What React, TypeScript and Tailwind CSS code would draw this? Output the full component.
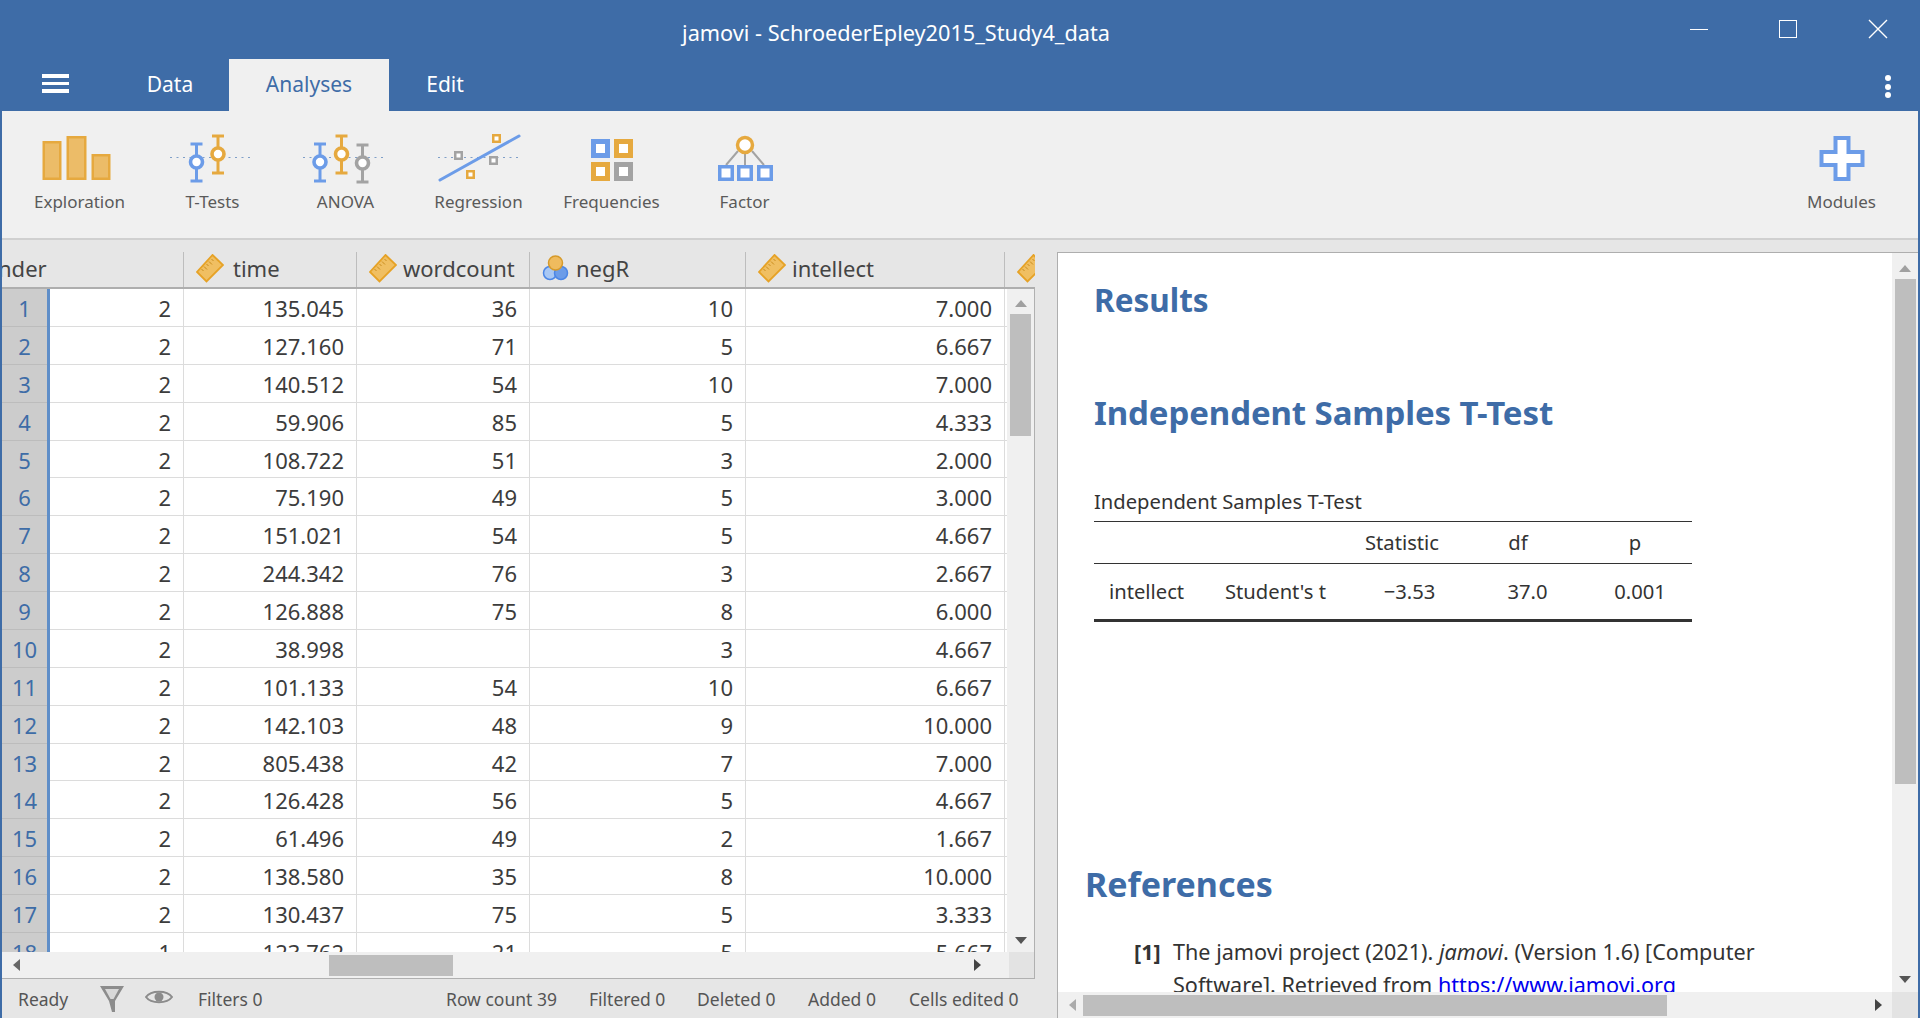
import React from "react";

const O = "#e6a93f";
const OF = "#ecbc68";
const B = "#6c9ce8";
const G = "#a3a3a3";

const rows: (string | number)[][] = [
  [2, "135.045", 36, 10, "7.000"],
  [2, "127.160", 71, 5, "6.667"],
  [2, "140.512", 54, 10, "7.000"],
  [2, "59.906", 85, 5, "4.333"],
  [2, "108.722", 51, 3, "2.000"],
  [2, "75.190", 49, 5, "3.000"],
  [2, "151.021", 54, 5, "4.667"],
  [2, "244.342", 76, 3, "2.667"],
  [2, "126.888", 75, 8, "6.000"],
  [2, "38.998", "", 3, "4.667"],
  [2, "101.133", 54, 10, "6.667"],
  [2, "142.103", 48, 9, "10.000"],
  [2, "805.438", 42, 7, "7.000"],
  [2, "126.428", 56, 5, "4.667"],
  [2, "61.496", 49, 2, "1.667"],
  [2, "138.580", 35, 8, "10.000"],
  [2, "130.437", 75, 5, "3.333"],
  [1, "123.762", 21, 5, "5.667"],
];

function Ruler() {
  return (
    <svg width="28" height="29" viewBox="0 0 28 29" className="shrink-0">
      <polygon points="16.500,1 27,11 10.500,27.500 1,18" fill="#f0bf62" stroke="#e6a226" strokeWidth="1.800" />
      <path d="M15.500 5L17.500 7M13 7.500L16 10.500M10.500 10L12.500 12M8 12.500L11 15.500M5.500 15L7.500 17" stroke="#c98d1e" strokeWidth="1" />
    </svg>
  );
}

function Nominal() {
  return (
    <svg width="27" height="27" viewBox="0 0 27 27" className="shrink-0">
      <circle cx="8" cy="18" r="6.500" fill="#a9c8f4" stroke="#4b86e6" strokeWidth="1.500" />
      <circle cx="19" cy="18" r="6.500" fill="#6c9ce8" stroke="#4b86e6" strokeWidth="1.500" />
      <circle cx="13.500" cy="8" r="7" fill="#efbb5e" stroke="#d69a2a" strokeWidth="1.500" />
    </svg>
  );
}

function ErrorBar({ x, top, bottom, cy, color, cap = 12 }: { x: number; top: number; bottom: number; cy: number; color: string; cap?: number }) {
  return (
    <g>
      <path d={`M${x} ${top}V${bottom}M${x - cap / 2} ${top}H${x + cap / 2}M${x - cap / 2} ${bottom}H${x + cap / 2}`} stroke={color} strokeWidth="3" fill="none" />
      <circle cx={x} cy={cy} r="6" fill="#fff" stroke={color} strokeWidth="3.600" />
    </g>
  );
}

function Square({ x, y, s, color, w = 2.500 }: { x: number; y: number; s: number; color: string; w?: number }) {
  return <rect x={x + w / 2} y={y + w / 2} width={s - w} height={s - w} fill="#fff" stroke={color} strokeWidth={w} />;
}

function ExplorationIcon() {
  return (
    <svg width="90" height="56" viewBox="0 0 90 56">
      <rect x="8.750" y="13.250" width="16.500" height="36.500" fill={OF} stroke={O} strokeWidth="2.500" />
      <rect x="32.750" y="8.250" width="17.500" height="41.500" fill={OF} stroke={O} strokeWidth="2.500" />
      <rect x="57.750" y="26.250" width="16.500" height="23.500" fill={OF} stroke={O} strokeWidth="2.500" />
    </svg>
  );
}

function Dotted({ x1, x2 }: { x1: number; x2: number }) {
  return <path d={`M${x1} 28.500H${x2}`} stroke="#7f9fc8" strokeWidth="1" strokeDasharray="2 4.500" fill="none" />;
}

function TTestIcon() {
  return (
    <svg width="90" height="56" viewBox="0 0 90 56">
      <Dotted x1={2} x2={84} />
      <ErrorBar x={28.500} top={15} bottom={52} cy={33} color={B} />
      <ErrorBar x={50} top={7} bottom={44} cy={25} color={O} />
    </svg>
  );
}

function AnovaIcon() {
  return (
    <svg width="90" height="56" viewBox="0 0 90 56">
      <Dotted x1={2} x2={84} />
      <ErrorBar x={19} top={15} bottom={52} cy={33} color={B} />
      <ErrorBar x={40.500} top={7} bottom={44} cy={25} color={O} />
      <ErrorBar x={61.500} top={16} bottom={53} cy={34} color={G} />
    </svg>
  );
}

function RegressionIcon() {
  return (
    <svg width="90" height="56" viewBox="0 0 90 56">
      <Dotted x1={4} x2={86} />
      <path d="M6 51L85 7" stroke={B} strokeWidth="3" strokeLinecap="round" />
      <Square x={58} y={5} s={9} color={O} />
      <Square x={20} y={22} s={9} color={G} />
      <Square x={55} y={27} s={9} color={G} />
      <Square x={32} y={41} s={9} color={O} />
    </svg>
  );
}

function FrequenciesIcon() {
  return (
    <svg width="90" height="56" viewBox="0 0 90 56">
      <Square x={24} y={10} s={19} color={B} w={5} />
      <Square x={47} y={10} s={19} color={O} w={5} />
      <Square x={24} y={33} s={19} color={O} w={5} />
      <Square x={47} y={33} s={19} color={G} w={5} />
    </svg>
  );
}

function FactorIcon() {
  return (
    <svg width="90" height="56" viewBox="0 0 90 56">
      <path d="M38 22L26 36M45 24V36M52 22L64 36" stroke={G} strokeWidth="2" fill="none" />
      <circle cx="45" cy="16" r="7.500" fill="#fff" stroke={O} strokeWidth="3.500" />
      <Square x={18} y={36} s={16} color={B} w={3.500} />
      <Square x={37} y={36} s={16} color={B} w={3.500} />
      <Square x={57} y={36} s={16} color={B} w={3.500} />
    </svg>
  );
}

function PlusIcon() {
  return (
    <svg width="90" height="56" viewBox="0 0 90 56">
      <polygon points="38.500,9 51.500,9 51.500,23 65.500,23 65.500,36 51.500,36 51.500,50 38.500,50 38.500,36 24.500,36 24.500,23 38.500,23" fill="#fff" stroke={B} strokeWidth="4" />
    </svg>
  );
}

function ToolButton({ label, children, className = "" }: { label: string; children: React.ReactNode; className?: string }) {
  return (
    <div className={`flex w-[133px] flex-col items-center ${className}`}>
      <div className="h-[56px]">{children}</div>
      <div className="mt-[5px] h-[24px] text-[17px] leading-[24px] text-[#5a5a5a]">{label}</div>
    </div>
  );
}

function Tri({ dir, color = "#a0a0a0" }: { dir: "up" | "down" | "left" | "right"; color?: string }) {
  const pts = { up: "0,8 6,1 12,8", down: "0,1 12,1 6,8", left: "8,0 8,12 1,6", right: "1,0 1,12 8,6" }[dir];
  const w = dir === "up" || dir === "down" ? 12 : 9;
  const h = dir === "up" || dir === "down" ? 9 : 12;
  const vb = `0 0 ${w} ${h}`;
  return (
    <svg width={w} height={h} viewBox={vb} className="shrink-0">
      <polygon points={pts} fill={color} />
    </svg>
  );
}

function HeaderCell({ w, children, last }: { w: string; children: React.ReactNode; last?: boolean }) {
  return (
    <div className={`relative flex h-full shrink-0 items-center overflow-hidden pt-[8px] ${w}`}>
      {children}
      {!last && <div className="absolute right-0 bottom-0 h-[35px] w-px bg-[#bdbdbd]" />}
    </div>
  );
}

function Cell({ w, v }: { w: string; v: string | number }) {
  return <div className={`h-full shrink-0 border-r border-[#dcdcdc] pr-[12px] text-right ${w}`}>{v}</div>;
}

function DataPane() {
  return (
    <div className="flex w-[1033px] shrink-0 flex-col">
      <div className="flex h-[49px] shrink-0 items-stretch border-b-2 border-[#aeaeae] bg-[#e6e6e6] pt-[1px] text-[22px] text-[#444]">
        <HeaderCell w="w-[182px]">
          <span className="ml-[-4px]">nder</span>
        </HeaderCell>
        <HeaderCell w="w-[173px]">
          <div className="ml-[12px] flex items-center gap-[9px]"><Ruler /><span>time</span></div>
        </HeaderCell>
        <HeaderCell w="w-[173px]">
          <div className="ml-[12px] flex items-center gap-[6px]"><Ruler /><span>wordcount</span></div>
        </HeaderCell>
        <HeaderCell w="w-[216px]">
          <div className="ml-[12px] flex items-center gap-[7px]"><Nominal /><span>negR</span></div>
        </HeaderCell>
        <HeaderCell w="w-[259px]">
          <div className="ml-[12px] flex items-center gap-[6px]"><Ruler /><span>intellect</span></div>
        </HeaderCell>
        <HeaderCell w="w-[30px]" last>
          <div className="ml-[12px]"><Ruler /></div>
        </HeaderCell>
      </div>
      <div className="flex min-h-0 flex-1 border-r border-[#b0b0b0] bg-white">
        <div className="w-[1005px] shrink-0 overflow-hidden">
          {rows.map((r, i) => (
            <div key={i} className="flex h-[37.88px] border-b border-[#dcdcdc] text-[22px] leading-[38.500px] text-[#3c3c3c]">
              <div className="h-[38px] w-[45px] shrink-0 border-b border-[#bcbcbc] bg-[#cccccc] text-center text-[#3e6ca7]">{i + 1}</div>
              <div className="h-[38px] w-[3px] shrink-0 bg-[#5f8ec8]" />
              <Cell w="w-[134px]" v={r[0]} />
              <Cell w="w-[173px]" v={r[1]} />
              <Cell w="w-[173px]" v={r[2]} />
              <Cell w="w-[216px]" v={r[3]} />
              <Cell w="w-[259px]" v={r[4]} />
            </div>
          ))}
        </div>
        <div className="flex w-[27px] shrink-0 flex-col items-center bg-[#f0f0f0] pt-[10px]">
          <Tri dir="up" />
          <div className="mt-[6px] h-[122px] w-[21px] bg-[#bebebe]" />
          <div className="flex-1" />
          <div className="mb-[7px]"><Tri dir="down" color="#555" /></div>
        </div>
      </div>
      <div className="flex h-[27px] shrink-0 items-center border-r border-b border-[#b0b0b0] bg-[#f0f0f0]">
        <div className="ml-[10px]"><Tri dir="left" color="#666" /></div>
        <div className="ml-[308px] h-[21px] w-[124px] bg-[#bebebe]" />
        <div className="flex-1" />
        <div className="mr-[27px]"><Tri dir="right" color="#444" /></div>
        <div className="h-full w-[25px] bg-[#e3e3e3]" />
      </div>
      <div className="flex h-[39px] shrink-0 items-center pt-[1px] text-[17.500px] text-[#555]">
        <span className="ml-[16px] w-[81px]">Ready</span>
        <svg width="26" height="28" viewBox="0 0 26 28" className="shrink-0">
          <path d="M1 1H25L16 16V27H13L10 16Z" fill="#8c8c8c" />
          <path d="M6 4H20L14.500 14H11.500Z" fill="#d8d8d8" />
        </svg>
        <svg width="28" height="16" viewBox="0 0 28 16" className="ml-[20px] mb-[4px] shrink-0">
          <path d="M1 8C6 1 22 1 27 8C22 15 6 15 1 8Z" fill="#e6e6e6" stroke="#8c8c8c" strokeWidth="2" />
          <circle cx="14" cy="8" r="4.500" fill="#8c8c8c" />
        </svg>
        <span className="ml-[25px] w-[248px]">Filters 0</span>
        <span className="w-[143px]">Row count 39</span>
        <span className="w-[108px]">Filtered 0</span>
        <span className="w-[111px]">Deleted 0</span>
        <span className="w-[101px]">Added 0</span>
        <span className="whitespace-nowrap">Cells edited 0</span>
      </div>
    </div>
  );
}

function ResultsPane() {
  const tcell = "text-[20.200px] text-[#333]";
  return (
    <div className="mt-[12px] ml-[22px] flex h-[766px] min-w-0 flex-1 flex-col border-t border-l border-[#aeaeae] bg-white">
      <div className="flex min-h-0 flex-1">
        <div className="min-w-0 flex-1 overflow-hidden pl-[36px]">
          <h1 className="mt-[27px] text-[31.500px] leading-[40px] font-bold text-[#3e6ca7]">Results</h1>
          <h2 className="mt-[71px] text-[33px] leading-[44px] font-bold tracking-[-0.1px] text-[#3e6ca7]">Independent Samples T-Test</h2>
          <div className={`mt-[52px] mb-[6px] h-[28px] leading-[28px] ${tcell}`}>Independent Samples T-Test</div>
          <div className="w-[598px] border-t border-[#333]">
            <div className={`grid h-[42px] grid-cols-[116px_140px_104px_126px_96px_16px] items-center border-b border-[#333] text-center ${tcell}`}>
              <div />
              <div />
              <div>Statistic</div>
              <div className="pl-[2px]">df</div>
              <div className="pl-[14px]">p</div>
              <div />
            </div>
            <div className={`grid h-[58px] grid-cols-[116px_140px_104px_126px_96px_16px] items-center border-b-[3px] border-[#333] ${tcell}`}>
              <div className="pl-[15px]">intellect</div>
              <div className="pl-[15px]">Student's t</div>
              <div className="pl-[15px] text-center">−3.53</div>
              <div className="pl-[21px] text-center">37.0</div>
              <div className="pl-[24px] text-center">0.001</div>
              <div />
            </div>
          </div>
          <h2 className="mt-[242px] ml-[-9px] text-[34px] leading-[40px] font-bold text-[#3e6ca7]">References</h2>
          <div className="mt-[31px] flex text-[21.600px] leading-[33px] text-[#333]">
            <div className="ml-[40px] w-[39px] font-bold">[1]</div>
            <div className="w-[600px]">
              The jamovi project (2021). <i>jamovi</i>. (Version 1.6) [Computer Software]. Retrieved from <span className="text-[#0000ee]">https://www.jamovi.org</span>
            </div>
          </div>
        </div>
        <div className="flex w-[26px] shrink-0 flex-col items-center bg-[#f0f0f0] pt-[11px]">
          <Tri dir="up" />
          <div className="mt-[6px] h-[505px] w-[21px] bg-[#bebebe]" />
          <div className="flex-1" />
          <div className="mb-[8px]"><Tri dir="down" color="#555" /></div>
        </div>
      </div>
      <div className="flex h-[26px] shrink-0 items-center bg-[#f0f0f0]">
        <div className="ml-[10px]"><Tri dir="left" color="#aaa" /></div>
        <div className="ml-[6px] h-[21px] w-[584px] bg-[#bebebe]" />
        <div className="flex-1" />
        <div className="mr-[9px]"><Tri dir="right" color="#444" /></div>
        <div className="h-full w-[26px] bg-[#e3e3e3]" />
      </div>
    </div>
  );
}

export default function App() {
  return (
    <div className="flex h-[1018px] w-[1920px] flex-col overflow-hidden bg-[#3e6ca7] px-[2px] font-['Noto_Sans','Open_Sans',sans-serif]">
      <div className="relative flex h-[59px] shrink-0 items-center justify-center pt-[7px] pr-[128px] text-[21.700px] text-white">
        jamovi - SchroederEpley2015_Study4_data
        <div className="absolute top-[20px] left-[1688px] h-px w-[18px] translate-y-[9px] bg-white" />
        <div className="absolute top-[20px] left-[1777px] size-[18px] border border-white" />
        <svg width="20" height="20" viewBox="0 0 20 20" className="absolute top-[19px] left-[1866px]">
          <path d="M1 1L19 19M19 1L1 19" stroke="#fff" strokeWidth="1.400" />
        </svg>
      </div>
      <div className="relative flex h-[52px] shrink-0 items-stretch text-[21px] text-white">
        <div className="ml-[40px] flex w-[27px] flex-col justify-center gap-[4px] pb-[3px]">
          <div className="h-[3.500px] bg-white" />
          <div className="h-[3.500px] bg-white" />
          <div className="h-[3.500px] bg-white" />
        </div>
        <div className="flex w-[160px] items-center justify-center pl-[42px]">Data</div>
        <div className="flex w-[160px] items-center justify-center bg-[#f0f0f0] text-[#3e6ca7]">Analyses</div>
        <div className="flex w-[112px] items-center justify-center">Edit</div>
        <div className="absolute top-[16px] left-[1883px] flex flex-col gap-[2.500px]">
          <div className="size-[6px] rounded-full bg-white" />
          <div className="size-[6px] rounded-full bg-white" />
          <div className="size-[6px] rounded-full bg-white" />
        </div>
      </div>
      <div className="flex h-[129px] shrink-0 items-start justify-between border-b-2 border-[#d0d0d0] bg-[#f0f0f0] pt-[18px] pl-[11px] pr-[10px]">
        <div className="flex">
          <ToolButton label="Exploration"><ExplorationIcon /></ToolButton>
          <ToolButton label="T-Tests"><TTestIcon /></ToolButton>
          <ToolButton label="ANOVA"><AnovaIcon /></ToolButton>
          <ToolButton label="Regression"><RegressionIcon /></ToolButton>
          <ToolButton label="Frequencies"><FrequenciesIcon /></ToolButton>
          <ToolButton label="Factor"><FactorIcon /></ToolButton>
        </div>
        <ToolButton label="Modules"><PlusIcon /></ToolButton>
      </div>
      <div className="flex min-h-0 flex-1 bg-[#e6e6e6]">
        <DataPane />
        <ResultsPane />
      </div>
    </div>
  );
}
